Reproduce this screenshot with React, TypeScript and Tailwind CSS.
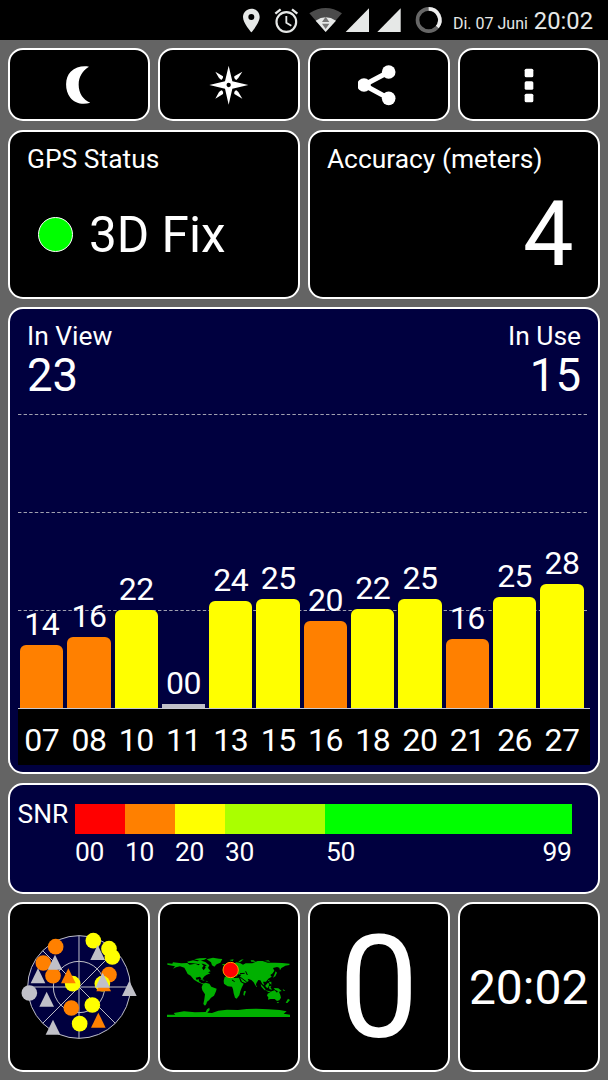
import type { ReactNode } from "react";

const ORANGE = "#ff8000";
const YELLOW = "#ffff00";
const SILVER = "#c0c0c8";

type Satellite = { id: string; snr: string; height: number; color: string };

const satellites: Satellite[] = [
  { id: "07", snr: "14", height: 63, color: ORANGE },
  { id: "08", snr: "16", height: 71.5, color: ORANGE },
  { id: "10", snr: "22", height: 98.5, color: YELLOW },
  { id: "11", snr: "00", height: 4, color: SILVER },
  { id: "13", snr: "24", height: 107.5, color: YELLOW },
  { id: "15", snr: "25", height: 109.5, color: YELLOW },
  { id: "16", snr: "20", height: 87.5, color: ORANGE },
  { id: "18", snr: "22", height: 99, color: YELLOW },
  { id: "20", snr: "25", height: 109, color: YELLOW },
  { id: "21", snr: "16", height: 69.5, color: ORANGE },
  { id: "26", snr: "25", height: 111.5, color: YELLOW },
  { id: "27", snr: "28", height: 124.5, color: YELLOW },
];

function Panel({ className, children }: { className: string; children: ReactNode }) {
  return (
    <div className={`rounded-[15px] border-2 border-white ${className}`}>{children}</div>
  );
}

function StatusBar() {
  return (
    <header className="flex h-10 shrink-0 items-start bg-black pl-[240px] text-[#e6e8e7]">
      <svg className="h-10 w-[26.67px] shrink-0" viewBox="30 0 80 120" fill="#e6e8e7">
        <path
          fillRule="evenodd"
          d="M64 26C50 26 39 37 39 51C39 69 64 97 64 97S89 69 89 51C89 37 78 26 64 26ZM64 42a9 9 0 1 1 0 18a9 9 0 1 1 0-18Z"
        />
      </svg>
      <svg className="h-10 w-[36.67px] shrink-0" viewBox="110 0 110 120" fill="none" stroke="#e6e8e7">
        <circle cx="168" cy="66" r="29.5" strokeWidth="6.5" />
        <path d="M168 48V68L183 77" strokeWidth="5.5" />
        <path d="M135 41L151 28M201 41L185 28" strokeWidth="7" />
      </svg>
      <svg className="h-10 w-[40.67px] shrink-0" viewBox="220 0 122 120">
        <path d="M288 96L239 40Q288 8 337 40Z" fill="#4b4b4b" />
        <path d="M288 96L258 62Q288 42 319 62Z" fill="#e6e8e7" />
        <path d="M288 50L299 66H277ZM277 71H299L288 87Z" fill="#777" />
      </svg>
      <svg className="h-10 w-[29.33px] shrink-0" viewBox="342 0 88 120">
        <path d="M347 96L417 25V96Z" fill="#e6e8e7" />
      </svg>
      <svg className="h-10 w-[33.33px] shrink-0" viewBox="430 0 100 120">
        <path d="M443 96L513 25V96Z" fill="#e6e8e7" />
      </svg>
      <svg className="h-10 w-[43.33px] shrink-0" viewBox="530 0 130 120" fill="none" strokeWidth="11">
        <circle cx="595" cy="60" r="33.5" stroke="#666" />
        <path d="M595 26.500A33.500 33.500 0 0 1 621 81" stroke="#eee" />
      </svg>
      <div className="flex items-baseline whitespace-nowrap pl-[3px] leading-[43px]">
        <span className="text-[16px]">Di. 07 Juni</span>
        <span className="ml-[6px] text-[23.75px]">20:02</span>
      </div>
    </header>
  );
}

function MoonIcon() {
  return (
    <svg className="h-[42px] w-[42px]" viewBox="174 71 126 126" fill="white">
      <path d="M267 79C248 75 227 80 212 94C194 111 194 151 211 172C226 190 249 194 271 187C250 179 236 158 236 133C236 109 248 90 267 79Z" />
    </svg>
  );
}

function CompassIcon() {
  return (
    <svg className="h-[42px] w-[42px]" viewBox="623 71 126 126" fill="white">
      <path
        fillRule="evenodd"
        d="M685 76L696 123L744 134L696 145L685 193L674 145L627 134L674 123ZM685 127.500a6.500 6.500 0 1 0 0 13a6.500 6.500 0 1 0 0-13Z"
      />
      <path d="M645 94L668 108Q670 115 663 119L656 113ZM726 94L702 108Q700 115 708 119L714 113ZM645 175L668 161Q670 153 663 150L656 155ZM726 175L702 161Q700 153 708 150L714 155Z" />
    </svg>
  );
}

function ShareIcon() {
  return (
    <svg className="h-[42px] w-[42px]" viewBox="161 71 126 126" fill="white">
      <circle cx="179" cy="134" r="20.500" />
      <circle cx="253" cy="95" r="20.500" />
      <circle cx="253" cy="174" r="20.500" />
      <path d="M253 95L179 134L253 174" fill="none" stroke="white" strokeWidth="15" />
    </svg>
  );
}

function MoreIcon() {
  return (
    <svg className="h-[42px] w-[42px]" viewBox="611 71 126 126" fill="white">
      <rect x="661" y="85" width="26" height="26" rx="5" />
      <rect x="661" y="122.500" width="26" height="26" rx="5" />
      <rect x="661" y="160" width="26" height="26" rx="5" />
    </svg>
  );
}

function GridLine() {
  return (
    <div className="h-[98px] pr-[2px]">
      <svg className="block h-[1px] w-full">
        <line x1="0" y1="0.5" x2="100%" y2="0.5" stroke="#a0a0b0" strokeWidth="1" strokeDasharray="3.4 2.2" />
      </svg>
    </div>
  );
}

function SatelliteChart() {
  return (
    <Panel className="flex h-[467px] flex-col bg-[#00003f] px-[7.5px] pt-[12px]">
      <div className="flex h-[93px] justify-between pl-[9.5px] pr-[9px]">
        <div>
          <div className="text-[26.4px] leading-[31px]">In View</div>
          <div className="text-[45.5px] leading-[48px]">23</div>
        </div>
        <div className="text-right">
          <div className="text-[26.4px] leading-[31px]">In Use</div>
          <div className="text-[45.5px] leading-[48px]">15</div>
        </div>
      </div>
      <div className="relative h-[294px]">
        <GridLine />
        <GridLine />
        <GridLine />
        <div className="absolute inset-0 flex items-end gap-[4px] pl-[2.5px] pr-[6.5px]">
          {satellites.map((s) => (
            <div key={s.id} className="flex flex-1 flex-col items-center">
              <span className="mb-[2px] text-[32px] leading-[38px] tracking-[-0.5px]">{s.snr}</span>
              <div
                className={s.snr === "00" ? "w-full" : "w-full rounded-t-[6px]"}
                style={{ height: s.height, backgroundColor: s.color }}
              />
            </div>
          ))}
        </div>
      </div>
      <div className="flex h-[57px] gap-[4px] border-t border-[#c8c8d0] bg-black pl-[2.5px] pr-[6.5px] pt-[12px]">
        {satellites.map((s) => (
          <span key={s.id} className="flex-1 text-center text-[32px] leading-[38px] tracking-[-0.5px]">
            {s.id}
          </span>
        ))}
      </div>
    </Panel>
  );
}

function SnrLegend() {
  return (
    <Panel className="flex h-[111px] bg-[#00003f] pl-[7.5px] pt-[19px]">
      <div className="w-[57.5px] text-[26.4px] leading-[20px]">SNR</div>
      <div className="w-[496.5px]">
        <div className="flex h-[30px]">
          <div className="w-[50px] bg-[#ff0000]" />
          <div className="w-[50px] bg-[#ff8000]" />
          <div className="w-[50px] bg-[#ffff00]" />
          <div className="w-[100px] bg-[#aaff00]" />
          <div className="flex-1 bg-[#00ff00]" />
        </div>
        <div className="flex text-[26.4px] leading-[36px] tracking-[-0.3px]">
          <span className="w-[50px]">00</span>
          <span className="w-[50px]">10</span>
          <span className="w-[50px]">20</span>
          <span className="w-[101px]">30</span>
          <span className="flex-1">50</span>
          <span>99</span>
        </div>
      </div>
    </Panel>
  );
}

type Marker = { kind: "dot" | "tri"; x: number; y: number; color: string };

const markers: Marker[] = [
  { kind: "dot", x: 136, y: 110, color: ORANGE },
  { kind: "dot", x: 99, y: 159, color: ORANGE },
  { kind: "dot", x: 128, y: 197, color: ORANGE },
  { kind: "dot", x: 249, y: 92, color: YELLOW },
  { kind: "dot", x: 296, y: 116, color: YELLOW },
  { kind: "dot", x: 306, y: 141, color: YELLOW },
  { kind: "dot", x: 187, y: 221, color: YELLOW },
  { kind: "dot", x: 296, y: 194, color: ORANGE },
  { kind: "dot", x: 276, y: 221, color: YELLOW },
  { kind: "dot", x: 183, y: 294, color: ORANGE },
  { kind: "dot", x: 246, y: 285, color: YELLOW },
  { kind: "dot", x: 208, y: 341, color: YELLOW },
  { kind: "dot", x: 57, y: 249, color: SILVER },
  { kind: "tri", x: 262, y: 150, color: SILVER },
  { kind: "tri", x: 134, y: 179, color: SILVER },
  { kind: "tri", x: 174, y: 220, color: ORANGE },
  { kind: "tri", x: 83, y: 220, color: SILVER },
  { kind: "tri", x: 280, y: 244, color: ORANGE },
  { kind: "tri", x: 277, y: 233, color: SILVER },
  { kind: "tri", x: 357, y: 258, color: SILVER },
  { kind: "tri", x: 109, y: 290, color: SILVER },
  { kind: "tri", x: 128, y: 374, color: SILVER },
  { kind: "tri", x: 264, y: 353, color: ORANGE },
];

function SkyPlot() {
  return (
    <svg className="h-[124px] w-[116.67px]" viewBox="32 45 350 372">
      <circle cx="206" cy="231" r="154" fill="#00003f" stroke="#c0c0c8" strokeWidth="3" />
      <g fill="none" stroke="#c0c0c8" strokeWidth="3">
        <circle cx="206" cy="231" r="77" />
        <path d="M52 231H360M206 77V385M97 122L315 340M315 122L97 340" />
      </g>
      {markers.map((m, i) =>
        m.kind === "dot" ? (
          <circle key={i} cx={m.x} cy={m.y} r="23.5" fill={m.color} />
        ) : (
          <path key={i} d={`M${m.x - 22} ${m.y}h44l-22 -45z`} fill={m.color} />
        ),
      )}
    </svg>
  );
}

function WorldMap() {
  return (
    <svg className="h-[90px] w-[137px]" viewBox="6 0 411 270">
      <g fill="#00b000">
        <path d="M28 70L43 71L45 67L70 70L88 69L95 74L112 71L122 76L128 69L137 77L132 84L137 91L146 79L158 94L150 97L157 100L145 105L138 110L132 119L126 110L113 113L116 120L122 117L123 124L130 129L138 130L133 132L119 126L108 119L98 107L89 102L84 92L79 83L66 79L54 82L45 86L51 79L43 77L28 74Z" />
        <path d="M87 65L105 61L119 64L125 61L142 66L154 76L150 84L140 81L146 76L135 71L121 72L105 70L91 69ZM108 58L125 55L147 54L139 59L126 62Z" />
        <path d="M146 58L165 53L183 56L193 57L187 68L176 73L169 80L162 76L159 67ZM193 72L201 72L200 76L194 76Z" />
        <path d="M135 131L143 128L154 131L160 140L176 146L174 154L168 167L159 173L153 181L147 185L145 192L141 197L136 192L139 178L141 163L133 151L131 142ZM124 116L137 119L140 122L133 121ZM143 122L150 124L147 126Z" />
        <path d="M200 111L213 106L220 108L229 114L243 113L248 126L257 131L251 143L247 154L244 166L236 176L231 173L227 160L225 148L222 140L209 139L198 131L197 122ZM258 153L264 154L259 168L256 164Z" />
        <path d="M202 96L209 97L214 89L221 83L229 82L226 75L234 67L246 69L255 74L263 70L283 70L299 63L314 63L329 68L351 68L372 69L395 71L394 75L382 77L377 80L370 84L366 91L364 83L357 81L345 84L349 92L344 100L337 105L341 110L331 116L324 125L315 125L319 136L313 132L307 121L301 120L295 130L293 138L287 127L280 120L269 116L272 123L262 129L252 125L245 110L250 104L239 103L237 110L230 105L222 98L213 105L203 106Z" />
        <path d="M203 84L206 79L211 88L206 91ZM240 67L249 59L257 58L248 65ZM214 60L227 58L224 64ZM278 61L286 61L294 65L280 65ZM319 63L331 61L337 65ZM349 104L353 94L357 98L352 109L345 113ZM330 121L334 119L334 125ZM293 136L297 138L295 142Z" />
        <path d="M308 132L315 139L323 149L320 151L310 140ZM322 137L330 128L334 132L330 144L324 142ZM333 139L341 137L337 141L342 149L334 147ZM321 151L333 153L341 155L332 156ZM333 126L340 125L340 134L334 129ZM347 144L361 145L371 153L364 155L352 150ZM374 147L382 152L377 153Z" />
        <path d="M329 161L341 154L350 151L357 158L361 151L367 165L369 173L364 181L357 183L350 177L338 177L330 179L331 172L327 167ZM356 186L363 186L360 190ZM390 176L396 180L388 189L383 188Z" />
        <path d="M27 224L52 224L47 219L78 214L111 217L143 216L147 208L154 203L155 210L148 218L162 219L181 212L207 209L240 210L266 207L295 206L331 208L365 210L386 214L377 221L396 224V231H27Z" />
      </g>
      <path
        d="M222 120L230 125M246 111L266 126M246 101L260 100M263 94L268 105"
        fill="none"
        stroke="black"
        strokeWidth="3"
      />
      <circle cx="218" cy="90" r="23" fill="#ff0000" stroke="#ff9a00" strokeWidth="3" />
    </svg>
  );
}

export default function App() {
  return (
    <div className="flex h-[1080px] w-[608px] flex-col overflow-hidden bg-[#646464] font-['Roboto',sans-serif] text-white">
      <StatusBar />
      <main className="flex flex-col gap-[8.25px] pl-2 pr-[8.5px] pt-[8.25px]">
        <div className="grid grid-cols-4 gap-[8.25px]">
          <Panel className="flex h-[73px] items-center justify-center bg-black">
            <MoonIcon />
          </Panel>
          <Panel className="flex h-[73px] items-center justify-center bg-black">
            <CompassIcon />
          </Panel>
          <Panel className="flex h-[73px] items-center justify-center bg-black">
            <ShareIcon />
          </Panel>
          <Panel className="flex h-[73px] items-center justify-center bg-black">
            <MoreIcon />
          </Panel>
        </div>
        <div className="grid grid-cols-2 gap-[8.25px]">
          <Panel className="h-[169.5px] bg-black pl-[17px] pt-[12px]">
            <div className="text-[26.4px] leading-[31px]">GPS Status</div>
            <div className="mt-[30px] flex items-center pl-[11px]">
              <div className="size-[35px] rounded-full border border-white bg-[#00ff00]" />
              <span className="ml-[16px] text-[49.5px] leading-[60px]">3D Fix</span>
            </div>
          </Panel>
          <Panel className="h-[169.5px] bg-black pl-[17px] pr-[24px] pt-[12px]">
            <div className="text-[26.4px] leading-[31px]">Accuracy (meters)</div>
            <div className="mt-[7px] text-right text-[90px] leading-[105px]">4</div>
          </Panel>
        </div>
        <SatelliteChart />
        <SnrLegend />
        <div className="grid grid-cols-4 gap-[8.25px]">
          <Panel className="flex h-[170px] items-center justify-center bg-black">
            <SkyPlot />
          </Panel>
          <Panel className="flex h-[170px] items-center justify-center bg-black pb-[4px]">
            <WorldMap />
          </Panel>
          <Panel className="flex h-[170px] items-center justify-center bg-black pt-[4px]">
            <span className="text-[142.5px] leading-[162px]">0</span>
          </Panel>
          <Panel className="flex h-[170px] items-center justify-center bg-black pt-[2px]">
            <span className="text-[48px] leading-[58px]">20:02</span>
          </Panel>
        </div>
      </main>
    </div>
  );
}
